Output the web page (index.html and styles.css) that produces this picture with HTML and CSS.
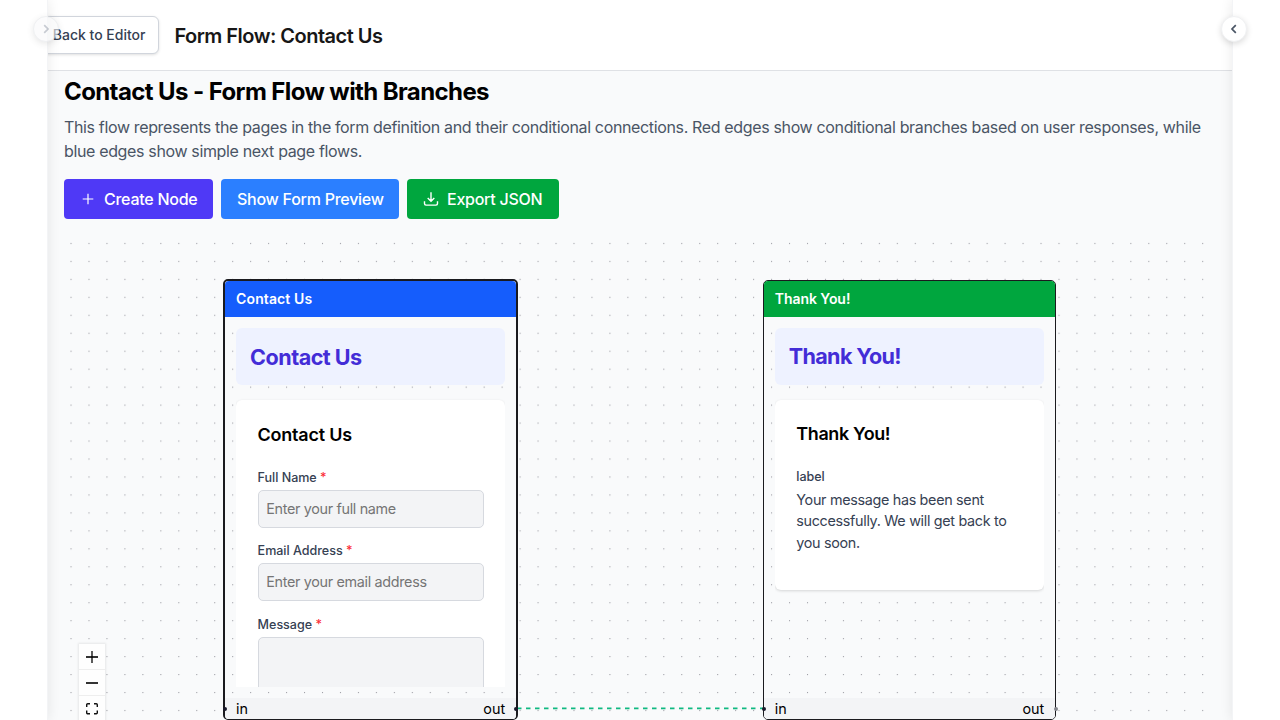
FILE: index.html
```html
<!DOCTYPE html>
<html lang="en">
<head>
<meta charset="utf-8">
<title>Form Flow: Contact Us</title>
<link rel="stylesheet" href="styles.css">
</head>
<body>
<div class="app">
  <aside class="rail rail-left">
    <button class="toggle toggle-left" aria-label="Expand left panel"><svg width="16" height="16" viewBox="0 0 16 16"><path d="M6.2 4.2 10 8 6.2 11.8"/></svg></button>
  </aside>
  <main class="main">
    <header class="topbar">
      <button class="back">Back to Editor</button>
      <h1 class="page-title">Form Flow: Contact Us</h1>
    </header>
    <section class="content">
      <h2 class="flow-title">Contact Us - Form Flow with Branches</h2>
      <p class="flow-text">This flow represents the pages in the form definition and their conditional connections. Red edges show conditional branches based on user responses, while blue edges show simple next page flows.</p>
      <div class="actions">
        <button class="btn btn-create"><svg class="icon" width="16" height="16" viewBox="0 0 16 16"><path d="M8 2.7v10.6M2.7 8h10.6"/></svg><span>Create Node</span></button>
        <button class="btn btn-preview"><span>Show Form Preview</span></button>
        <button class="btn btn-export"><svg class="icon icon-export" width="16" height="16" viewBox="0 0 16 16"><path d="M8 1.2v9M4.7 6.9 8 10.2l3.3-3.3M1.5 10.2v2.4a1.5 1.5 0 0 0 1.5 1.5h10a1.5 1.5 0 0 0 1.5-1.5v-2.4"/></svg><span>Export JSON</span></button>
      </div>
      <div class="canvas">
        <svg class="layer" width="1152" height="485">
          <defs><pattern id="dots" x="6.5" y="7.9" width="17.963" height="17.963" patternUnits="userSpaceOnUse"><circle cx="0.6" cy="0.6" r="0.55" fill="#81818a"/></pattern></defs>
          <rect width="1152" height="485" fill="url(#dots)"/>
          <path class="edge" d="M453 473.3H700"/>
        </svg>
        <article class="node node-contact">
          <div class="node-head">Contact Us</div>
          <div class="node-body">
            <div class="banner">Contact Us</div>
            <div class="card">
              <h3 class="card-title">Contact Us</h3>
              <div class="field"><label class="label">Full Name <span class="req">*</span></label><div class="input">Enter your full name</div></div>
              <div class="field"><label class="label">Email Address <span class="req">*</span></label><div class="input">Enter your email address</div></div>
              <div class="field"><label class="label">Message <span class="req">*</span></label><div class="input area"></div></div>
            </div>
          </div>
          <div class="node-foot"><span>in</span><span>out</span></div>
          <i class="handle handle-in"></i><i class="handle handle-out"></i>
        </article>
        <article class="node node-thanks">
          <div class="node-head">Thank You!</div>
          <div class="node-body">
            <div class="banner">Thank You!</div>
            <div class="card card-short">
              <h3 class="card-title">Thank You!</h3>
              <div class="label">label</div>
              <p class="message">Your message has been sent successfully. We will get back to you soon.</p>
            </div>
          </div>
          <div class="node-foot"><span>in</span><span>out</span></div>
          <i class="handle handle-in"></i><i class="handle handle-out muted"></i>
        </article>
        <div class="controls">
          <button aria-label="Zoom in"><svg width="12" height="12" viewBox="0 0 12 12"><path d="M6 0v12" stroke="#333" stroke-width="1.6"/><path d="M0 6h12" stroke="#000" stroke-width="1.6"/></svg></button>
          <button aria-label="Zoom out"><svg width="12" height="12" viewBox="0 0 12 12"><path d="M0 6h12" stroke="#000" stroke-width="1.6"/></svg></button>
          <button aria-label="Fit view"><svg width="12" height="12" viewBox="0 0 12 12"><path d="M.7 4V1.7a1 1 0 0 1 1-1H4M8 .7h2.3a1 1 0 0 1 1 1V4M11.3 7.5v2.3a1 1 0 0 1-1 1H8M4 10.8H1.7a1 1 0 0 1-1-1V7.5" fill="none" stroke="#111" stroke-width="1.4"/></svg></button>
        </div>
      </div>
    </section>
  </main>
  <aside class="rail rail-right">
    <button class="toggle toggle-right" aria-label="Expand right panel"><svg width="16" height="16" viewBox="0 0 16 16"><path d="M9.8 4.2 6 8l3.8 3.8"/></svg></button>
  </aside>
</div>
</body>
</html>
```

FILE: styles.css
```css
* { box-sizing: border-box; }
body { margin: 0; overflow: hidden; background: #fff; font-family: Inter, "Liberation Sans", sans-serif; line-height: 24px; color: #000; }
h1, h2, h3, p { margin: 0; }
button { font: inherit; border: 0; padding: 0; }
svg { display: block; flex: none; }
.app { display: grid; grid-template-columns: 48px 1184px 48px; width: 1280px; height: 720px; overflow: hidden; }
.rail { position: relative; z-index: 2; background: #fff; box-shadow: 0 0 12px rgba(0,0,0,.09); }
.rail-left { border-right: 1px solid #f3f4f6; }
.rail-right { border-left: 1px solid #f3f4f6; }
.toggle { position: absolute; top: 16px; width: 26px; height: 26px; display: grid; place-items: center; border-radius: 50%; border: 1px solid #f0f1f3; background: #fff; box-shadow: 0 2px 6px rgba(0,0,0,.14); }
.toggle svg { fill: none; stroke: #4a5565; stroke-width: 1.7; }
.toggle-left { left: 33px; opacity: .6; background: #f9fafb; border-color: #e5e7eb; }
.toggle-left svg { stroke: #a2a9b5; }
.toggle-right { left: -12px; }
.main { display: flex; flex-direction: column; min-width: 0; background: #f9fafb; }
.topbar { height: 71px; flex: none; display: flex; align-items: center; gap: 16px; background: #fff; border-bottom: 1px solid #dfe1e5; }
.back { width: 122px; height: 38px; margin-left: -11.5px; padding-right: 12px; text-align: right; white-space: nowrap; border: 1px solid #d1d5dc; border-radius: 6px; background: #fff; color: #364153; font-size: 14px; font-weight: 500; box-shadow: 0 1px 3px rgba(0,0,0,.13); }
.page-title { padding-top: 2px; font-size: 20px; line-height: 28px; font-weight: 600; letter-spacing: -.52px; color: #171717; }
.content { padding: 5px 16px 0; }
.flow-title { font-size: 24px; line-height: 32px; font-weight: 700; letter-spacing: -.6px; }
.flow-text { margin-top: 7px; color: #4a5565; font-size: 16px; letter-spacing: -.353px; }
.actions { display: flex; gap: 8px; margin-top: 16px; }
.btn { height: 40px; padding: 0 16px; display: flex; align-items: center; gap: 8px; border-radius: 4px; color: #fff; font-size: 16px; font-weight: 500; letter-spacing: -.26px; white-space: nowrap; }
.icon { fill: none; stroke: #fff; stroke-width: 1.2; }
.icon-export { stroke-width: 1.4; }
.btn-create { width: 149px; background: #4f39f6; }
.btn-preview { width: 178px; background: #2b7fff; }
.btn-export { width: 151.5px; background: #00a63e; }
.canvas { position: relative; height: 485px; margin-top: 16px; }
.layer { position: absolute; inset: 0; }
.edge { stroke: #10b981; stroke-width: 1.7; stroke-dasharray: 4.5 4.5; }
.node { position: absolute; display: flex; flex-direction: column; border: 1px solid #1a1a1e; border-radius: 5px; font-size: 14.37px; }
.node-contact { left: 159.3px; top: 44px; width: 294.6px; height: 441px; border-width: 2px 2px 1px; }
.node-thanks { left: 699px; top: 45px; width: 293px; height: 440px; }
.node-head { height: 36px; flex: none; padding: 0 10.8px; line-height: 36px; font-size: 14px; font-weight: 600; color: #fff; border-radius: 4px 4px 0 0; }
.node-contact .node-head { background: #155dfc; letter-spacing: .1px; }
.node-thanks .node-head { background: #00a63e; letter-spacing: -.06px; }
.node-body { flex: 1; min-height: 0; margin: 10.8px 10.8px 0; overflow: hidden; }
.banner { height: 57.5px; padding: 0 14px; line-height: 58px; border-radius: 6px; background: #eef2ff; color: #432dd7; font-size: 21.55px; font-weight: 700; letter-spacing: -.5px; }
.node-thanks .banner { line-height: 56px; letter-spacing: -.66px; }
.card { margin-top: 14.4px; height: 400px; padding: 21px 21.5px; background: #fff; border-radius: 6px; box-shadow: 0 1px 3px rgba(0,0,0,.15); }
.card-short { height: 190px; padding-top: 20px; }
.card-title { margin-bottom: 21px; font-size: 17.96px; line-height: 27px; font-weight: 600; letter-spacing: -.2px; }
.node-thanks .card-title { letter-spacing: -.36px; }
.field { margin-bottom: 14.4px; }
.label { display: block; height: 18px; line-height: 18px; font-size: 12.57px; font-weight: 500; letter-spacing: -.03px; color: #364153; }
.req { color: #fb2c36; }
.input { height: 38px; margin-top: 3.2px; padding: 0 7.6px; line-height: 36px; color: #757575; font-size: 14.37px; letter-spacing: -.32px; background: #f3f4f6; border: 1px solid #d6d9df; border-radius: 5px; }
.area { height: 90px; }
.message { margin-top: 3px; line-height: 21.6px; letter-spacing: -.32px; color: #364153; }
.node-foot { height: 21.5px; flex: none; margin-top: 10.8px; padding: 0 10.8px; display: flex; justify-content: space-between; line-height: 22px; background: #f3f4f6; border-radius: 0 0 4px 4px; }
.handle { position: absolute; top: 425.6px; width: 4px; height: 4px; border-radius: 50%; background: #1a192b; }
.node-thanks .handle { top: 425.6px; }
.handle-in { left: -2.5px; }
.handle-out { right: -2.5px; }
.muted { background: #85868d; }
.controls { position: absolute; left: 15px; top: 409px; width: 26px; display: flex; flex-direction: column; box-shadow: 0 0 2px 1px rgba(0,0,0,.08); }
.controls button { height: 26px; display: grid; place-items: center; background: #fefefe; border-bottom: 1px solid #eee; }
```
